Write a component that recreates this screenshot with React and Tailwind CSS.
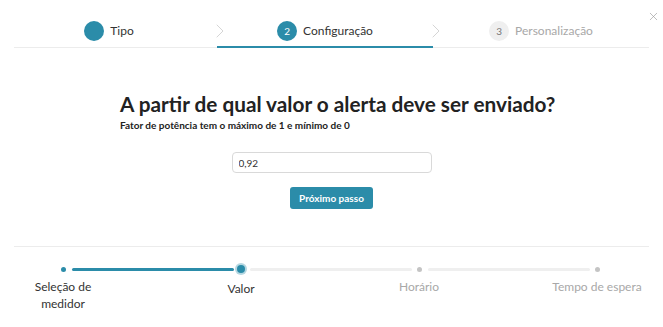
import { ChevronRight, X } from 'lucide-react'

const tabs = [
  { n: '', label: 'Tipo', state: 'done' },
  { n: '2', label: 'Configuração', state: 'active' },
  { n: '3', label: 'Personalização', state: 'todo' },
]

const progress = [
  { label: 'Seleção de medidor', state: 'done' },
  { label: 'Valor', state: 'active' },
  { label: 'Horário', state: 'todo' },
  { label: 'Tempo de espera', state: 'todo' },
]

function TabStep({ step, first }) {
  return (
    <div
      className={`relative flex h-[48px] w-[216px] items-center justify-center pt-[18px] pb-[2px] ${
        step.state === 'active' ? 'border-b-2 border-[#2b8ca9]' : 'border-b-2 border-transparent'
      }`}
    >
      {!first && (
        <ChevronRight size={24} strokeWidth={0.6} className="absolute left-[-9px] top-[19px] text-[#b8b8b8]" />
      )}
      <div
        className={`flex h-[20px] w-[20px] items-center justify-center rounded-full text-[10px] ${
          step.state === 'todo' ? 'bg-[#efefef] text-[#777]' : 'bg-[#2b8ca9] text-white'
        }`}
      >
        {step.n}
      </div>
      <span className={`ml-[6px] text-[12px] ${step.state === 'todo' ? 'text-[#a8a8a8]' : 'text-[#333]'}`}>
        {step.label}
      </span>
    </div>
  )
}

function ProgressItem({ step, last }) {
  const lineColor = step.state === 'done' ? 'bg-[#2b8ca9]' : 'bg-[#efefef]'
  return (
    <div className={`relative shrink-0 ${last ? 'w-[140px]' : 'w-[178px]'}`}>
      <div className="relative h-[22px]">
        {step.state === 'active' ? (
          <div className="absolute left-[64px] top-[5px] flex h-[12px] w-[12px] items-center justify-center rounded-full bg-[#2b8ca9]/35">
            <div className="h-[8px] w-[8px] rounded-full bg-[#2b8ca9]" />
          </div>
        ) : (
          <div
            className={`absolute left-[68px] top-[9px] h-[5px] w-[5px] rounded-full ${
              step.state === 'done' ? 'bg-[#2b8ca9]' : 'bg-[#c4c4c4]'
            }`}
          />
        )}
        {!last && <div className={`absolute left-[79px] top-[10px] h-[3px] w-[162px] rounded-full ${lineColor}`} />}
      </div>
      <div
        className={`mt-[-2px] w-[140px] text-center text-[12px] leading-[17px] ${
          step.state === 'todo' ? 'text-[#a8a8a8]' : 'text-[#333]'
        } ${step.label === 'Seleção de medidor' ? 'px-[36px]' : ''} ${step.state === 'active' ? 'pt-[2px]' : ''}`}
      >
        {step.label}
      </div>
    </div>
  )
}

export default function App() {
  return (
    <div className="relative h-[327px] w-[663px] overflow-hidden bg-white font-['Lato','Open_Sans',sans-serif]">
      <button className="absolute right-[3px] top-[10px] text-[#9a9a9a]">
        <X size={13} strokeWidth={1.2} />
      </button>

      {/* top tabs */}
      <div className="flex pl-[1px]">
        {tabs.map((t, i) => (
          <TabStep key={t.label} step={t} first={i === 0} />
        ))}
      </div>
      <div className="mx-[14px] mt-[-1px] h-px bg-[#ececec]" />

      {/* body */}
      <div className="flex flex-col items-center">
        <div className="ml-[13px] mt-[43px] w-[436px]">
          <h1 className="whitespace-nowrap text-[20.75px] font-bold leading-[26px] text-[#222]">
            A partir de qual valor o alerta deve ser enviado?
          </h1>
          <p className="mt-[1px] text-[10px] font-bold text-[#222]">Fator de potência tem o máximo de 1 e mínimo de 0</p>
        </div>
        <input
          defaultValue="0,92"
          className="mt-[19px] h-[21px] w-[200px] rounded-[4px] border border-[#d9d9d9] px-[6px] text-[10px] text-[#333] outline-none"
        />
        <button className="mt-[14px] h-[22px] w-[83px] rounded-[3px] bg-[#2b8ca9] text-[10px] font-bold text-white">
          Próximo passo
        </button>
      </div>

      <div className="mx-[14px] mt-[37px] h-px bg-[#ececec]" />

      {/* progress */}
      <div className="ml-[-7px] mt-[11px] flex">
        {progress.map((p, i) => (
          <ProgressItem key={p.label} step={p} last={i === progress.length - 1} />
        ))}
      </div>
    </div>
  )
}
